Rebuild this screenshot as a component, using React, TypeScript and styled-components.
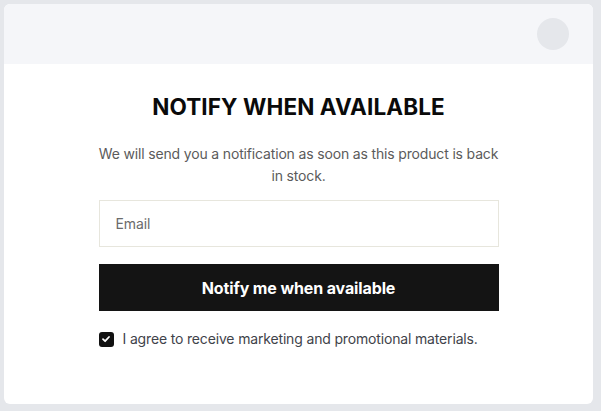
import React from "react";
import styled, { createGlobalStyle } from "styled-components";

const Global = createGlobalStyle`
  html, body { margin: 0; padding: 0; background: #e5e7eb; }
  body { font-family: Inter, "Noto Sans", sans-serif; }
  * { box-sizing: border-box; }
`;

const Page = styled.div`
  padding: 4px 8px 7px 4px;
  height: 411px;
`;

const Card = styled.div`
  background: #ffffff;
  border-radius: 6px;
  overflow: hidden;
  height: 400px;
  display: flex;
  flex-direction: column;
`;

const Header = styled.div`
  height: 60px;
  background: #f5f6f9;
  display: flex;
  align-items: center;
  justify-content: flex-end;
  padding: 0 24px;
`;

const CloseDot = styled.div`
  width: 32px;
  height: 32px;
  border-radius: 50%;
  background: #e5e7eb;
`;

const Body = styled.div`
  display: flex;
  flex-direction: column;
  align-items: center;
  padding-top: 29px;
`;

const Title = styled.h2`
  margin: 0;
  font-size: 22.5px;
  line-height: 28px;
  font-weight: 700;
  color: #0a0a0a;
  letter-spacing: 0.1px;
`;

const Desc = styled.p`
  margin: 22px 0 0;
  width: 400px;
  text-align: center;
  font-size: 14px;
  line-height: 22px;
  color: #5b5b5b;
  letter-spacing: -0.16px;
`;

const Form = styled.div`
  width: 400px;
  margin-top: 13px;
  display: flex;
  flex-direction: column;
`;

const Input = styled.input`
  height: 47px;
  border: 1px solid #e7e6dd;
  padding: 0 16px;
  font-family: Inter, sans-serif;
  font-size: 14px;
  color: #111;
  outline: none;
  letter-spacing: -0.1px;
  &::placeholder { color: #6b6b6b; }
`;

const Button = styled.button`
  margin-top: 17px;
  height: 47px;
  border: none;
  background: #141414;
  color: #ffffff;
  font-family: Inter, sans-serif;
  font-size: 16px;
  font-weight: 700;
  letter-spacing: -0.12px;
`;

const Agree = styled.label`
  margin-top: 19px;
  display: flex;
  align-items: center;
  gap: 9px;
  font-size: 14px;
  line-height: 18px;
  color: #3f434a;
  letter-spacing: -0.16px;
`;

const Box = styled.span`
  width: 15px;
  height: 15px;
  border-radius: 3px;
  background: #111;
  display: flex;
  align-items: center;
  justify-content: center;
`;

export default function App() {
  return (
    <>
      <Global />
      <Page>
        <Card>
          <Header>
            <CloseDot />
          </Header>
          <Body>
            <Title>NOTIFY WHEN AVAILABLE</Title>
            <Desc>We will send you a notification as soon as this product is back in stock.</Desc>
            <Form>
              <Input placeholder="Email" />
              <Button>Notify me when available</Button>
              <Agree>
                <Box>
                  <svg width="10" height="10" viewBox="0 0 10 10">
                    <path d="M2 5.2 L4.1 7.2 L8 3" fill="none" stroke="#fff" strokeWidth="1.8" strokeLinecap="round" strokeLinejoin="round" />
                  </svg>
                </Box>
                I agree to receive marketing and promotional materials.
              </Agree>
            </Form>
          </Body>
        </Card>
      </Page>
    </>
  );
}
